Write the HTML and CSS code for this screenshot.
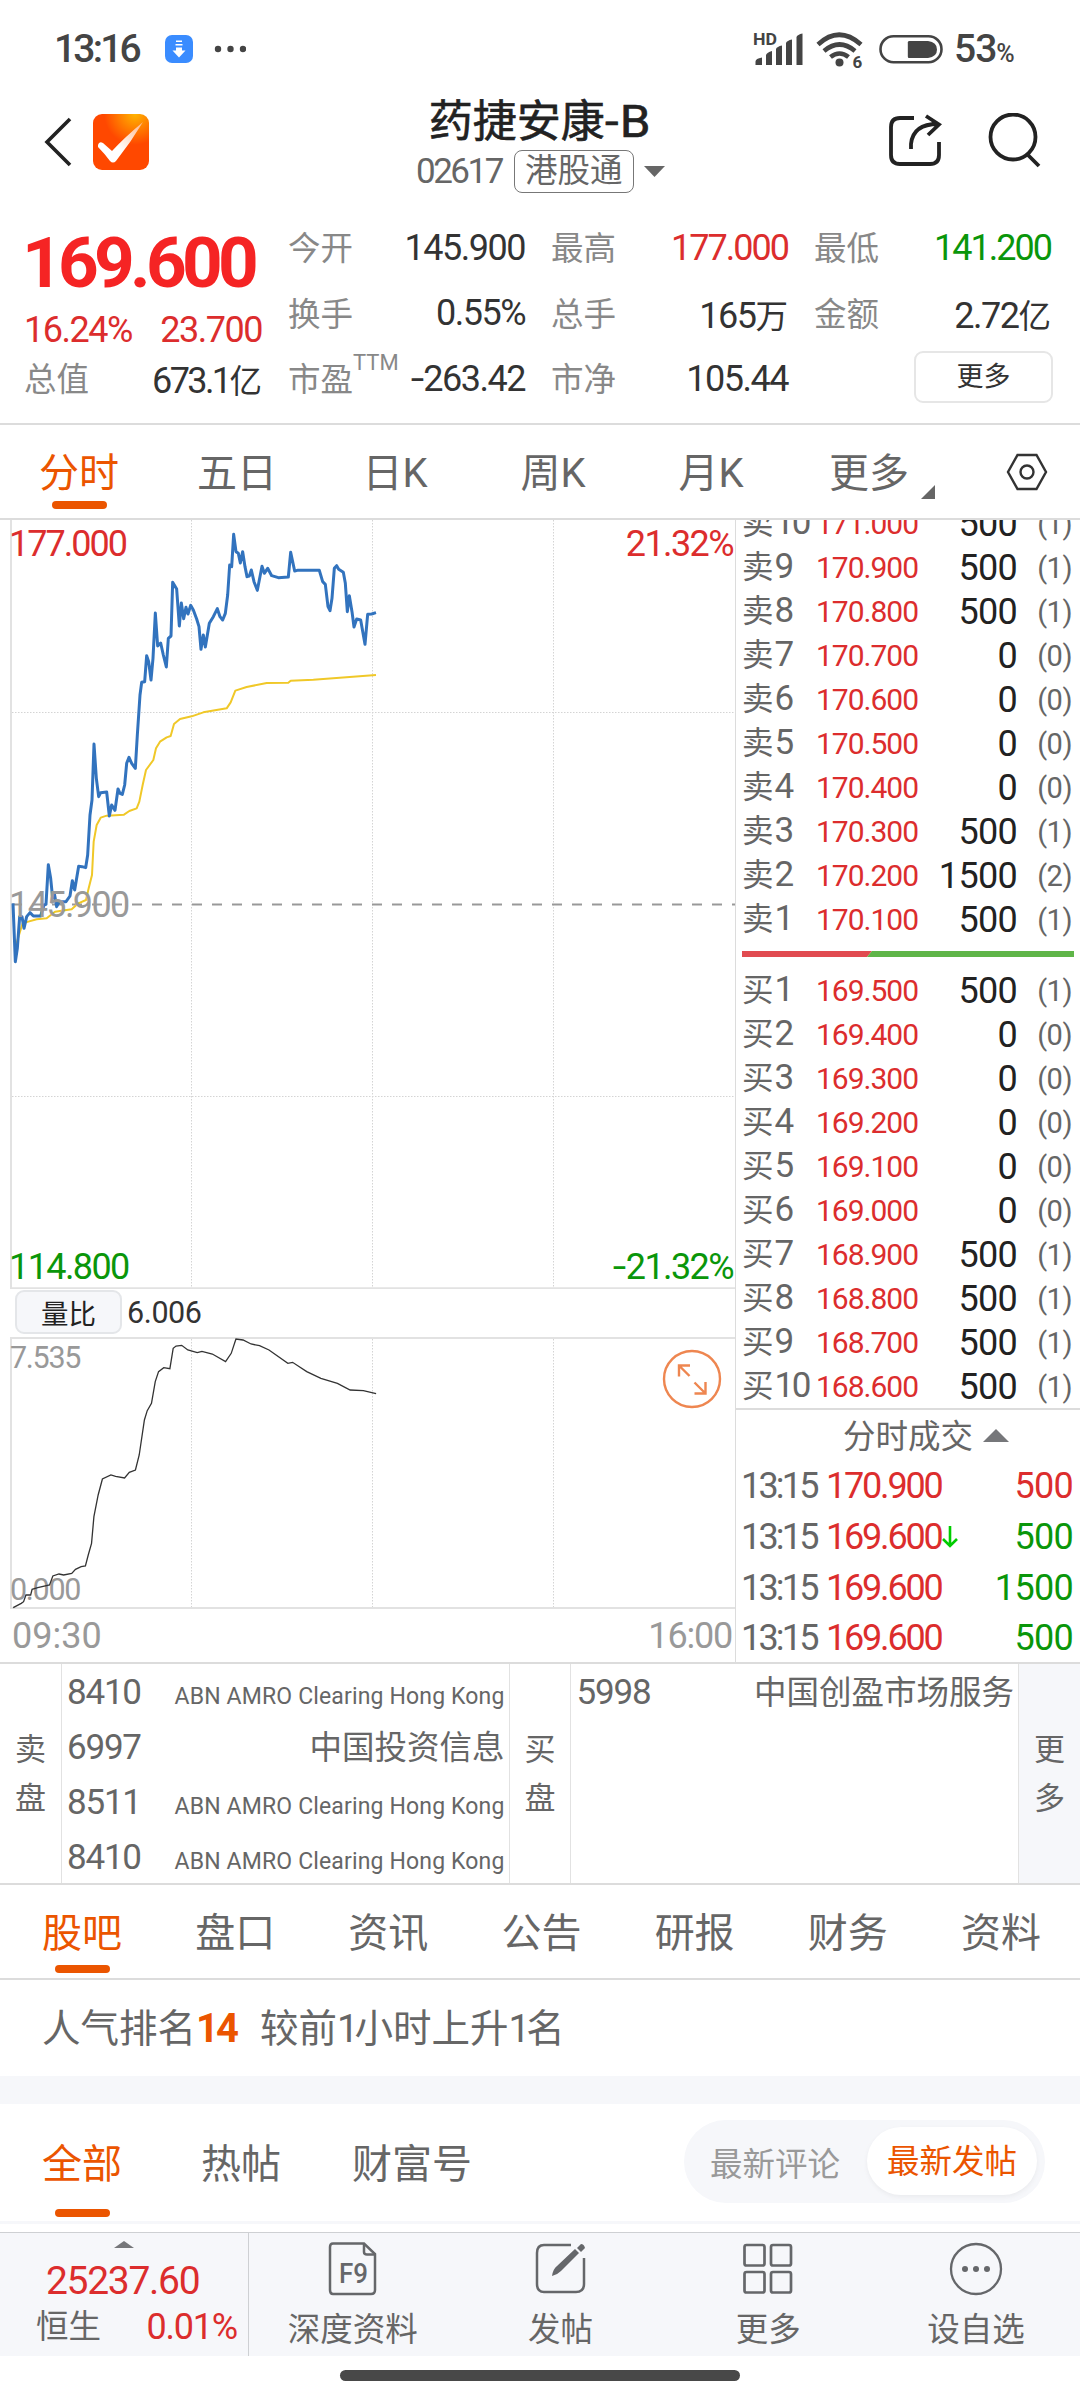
FILE: index.html
```
<!DOCTYPE html>
<html lang="zh-CN">
<head>
    <meta charset="UTF-8">
    <meta name="viewport" content="width=device-width, initial-scale=1.0">
    <title>药捷安康-B 02617</title>
    <link rel="stylesheet" href="styles.css">
</head>
<body>
    <!-- Status bar -->
    <div class="status-bar">
        <span class="clock">13:16</span>
        <svg class="download-icon" width="28" height="28" viewBox="0 0 28 28">
            <rect width="28" height="28" rx="7" fill="#3a8cff"/>
            <path d="M11 6.2h6M10.5 9.8h7" stroke="#fff" stroke-width="1.4"/>
            <path d="M11 12.5h6v3h3.5L14 22.5 7.500 15.500H11z" fill="#fff"/>
        </svg>
        <svg class="dots-icon" width="32" height="8" viewBox="0 0 32 8" fill="#444">
            <circle cx="4" cy="4" r="3.200"/><circle cx="16.500" cy="4" r="3.200"/><circle cx="29" cy="4" r="3.200"/>
        </svg>
        <div class="status-right">
            <svg width="201" height="40" viewBox="0 0 201 40">
                <g fill="#444">
                    <text x="0" y="16" font-size="16.500" font-weight="700" textLength="24" lengthAdjust="spacingAndGlyphs">HD</text>
                    <path d="M2.500 36v-3.500q0-3 6.500-4v7.500zM13 36V26q1-2.500 6-4v14zM23 36V20q1-2.500 6-3.500V36zM33 36V14q1-2.500 6-3.500V36zM43.500 36V8q1-2.500 6-3.500V36z"/>
                    <circle cx="86.500" cy="33.500" r="4"/>
                    <text x="99.500" y="39" font-size="17" font-weight="700">6</text>
                </g>
                <g fill="none" stroke="#444" stroke-width="4.600">
                    <path d="M65 15.500Q86 -4 108 15.500"/>
                    <path d="M71 22Q86.500 9 102 22"/>
                    <path d="M77.500 28Q86.500 21 95.500 28"/>
                </g>
                <rect x="127.500" y="7.200" width="61" height="26" rx="13" fill="none" stroke="#444" stroke-width="2.600"/>
                <path d="M156 12h19q9 1 9 8.500t-9 8.500h-19q-1.200 0-1.200-1.500v-14q0-1.500 1.200-1.500z" fill="#444"/>
            </svg>
            <span class="battery">53<small>%</small></span>
        </div>
    </div>

    <!-- Header -->
    <header class="header">
        <div class="header-left">
            <svg width="28" height="50" viewBox="0 0 28 50"><path d="M26 2L3 25l23 23" fill="none" stroke="#222" stroke-width="3.600"/></svg>
            <svg class="app-logo" width="56" height="56" viewBox="0 0 56 56">
                <defs>
                    <radialGradient id="logoBg" cx=".75" cy="0" r=".55"><stop offset="0" stop-color="#ffb400"/><stop offset="1" stop-color="#ff4800"/></radialGradient>
                    <linearGradient id="tick" x1="0" y1="1" x2="1" y2="0"><stop offset=".4" stop-color="#fff"/><stop offset="1" stop-color="#ffb68a"/></linearGradient>
                </defs>
                <rect width="56" height="56" rx="9" fill="url(#logoBg)"/>
                <path d="M5 31q1-4 5-2l9 8Q32 23 50 8 38 28 23 47q-3 3-6 0Q11 39 5 33z" fill="url(#tick)"/>
            </svg>
        </div>
        <div class="stock">
            <h1>药捷安康<em>-B</em></h1>
            <div class="stock-code">
                <span>02617</span>
                <span class="tag">港股通</span>
                <svg width="21" height="11" viewBox="0 0 21 11"><path d="M0 0h21L10.500 11z" fill="#666"/></svg>
            </div>
        </div>
        <div class="header-right">
            <svg width="54" height="56" viewBox="0 0 54 56" fill="none" stroke="#222" stroke-width="3.800">
                <path d="M26 5H12q-9 0-9 9v28q0 9 9 9h30q9 0 9-9V29"/>
                <path d="M23 36V31Q25 11 50 11M38 3l13 8.500L40 22"/>
            </svg>
            <svg width="54" height="56" viewBox="0 0 54 56" fill="none" stroke="#222" stroke-width="3.800">
                <circle cx="25" cy="24" r="22.500"/><path d="M39 41l12 12"/>
            </svg>
        </div>
    </header>

    <!-- Quote summary -->
    <section class="quote">
        <div class="quote-main">
            <div class="price">169.600</div>
            <div class="pair red"><span>16.24%</span><span>23.700</span></div>
            <div class="pair"><label>总值</label><span class="total">673.1<i>亿</i></span></div>
        </div>
        <div class="quote-grid">
            <div class="pair"><label>今开</label><span>145.900</span></div>
            <div class="pair"><label>最高</label><span class="red tight">177.000</span></div>
            <div class="pair"><label>最低</label><span class="green tight">141.200</span></div>
            <div class="pair"><label>换手</label><span>0.55%</span></div>
            <div class="pair"><label>总手</label><span>165<i>万</i></span></div>
            <div class="pair"><label>金额</label><span>2.72<i>亿</i></span></div>
            <div class="pair"><label>市盈<sup>TTM</sup></label><span><em class="minus">-</em>263.42</span></div>
            <div class="pair"><label>市净</label><span>105.44</span></div>
            <div class="pair"><button class="more-button">更多</button></div>
        </div>
    </section>

    <!-- Period tabs -->
    <nav class="period-tabs">
        <a class="active">分时</a>
        <a>五日</a>
        <a>日K</a>
        <a>周K</a>
        <a>月K</a>
        <a class="has-menu">更多</a>
        <svg width="42" height="40" viewBox="0 0 42 40" fill="none" stroke="#333" stroke-width="2.400">
            <path d="M11.500 3h19L40 20l-9.500 17h-19L2 20z"/><circle cx="21" cy="20" r="6.500"/>
        </svg>
    </nav>

    <main class="trade">
        <div class="charts">
            <!-- Price chart -->
            <div class="price-chart">
                <svg width="735" height="769" viewBox="0 520 735 769">
                    <g stroke="#d4d4d4" stroke-dasharray="1.500 1.500">
                        <path d="M191.500 520v768M372.500 520v768M553.500 520v768M12 712.500h723M12 1096.500h723"/>
                    </g>
                    <path d="M11 520v768.200h724" fill="none" stroke="#e2e2e2" stroke-width="2"/>
                    <path d="M12 904.500h723" stroke="#999" stroke-width="2" stroke-dasharray="10 10"/>
                    <g transform="translate(0 515) scale(.33333)" fill="none" stroke-linejoin="round">
                        <polyline stroke="#f0c828" stroke-width="6" points="48,1290 60,1250 68,1225 85,1220 110,1213 140,1210 165,1190 215,1183 235,1165 258,1155 266,1120 276,1080 281,980 290,930 302,908 320,902 372,899 388,888 410,880 418,860 428,810 438,765 460,735 468,700 480,680 500,667 512,663 522,627 540,612 575,604 610,592 680,580 692,562 706,527 740,516 800,504 865,503 872,497 940,494 1128,480"/>
                        <polyline stroke="#3273be" stroke-width="9" points="39,1165 46,1340 52,1300 59,1205 66,1205 72,1240 80,1205 90,1193 100,1203 122,1203 132,1170 138,1168 145,1049 152,1090 158,1150 163,1135 170,1175 178,1160 198,1160 210,1143 217,1097 224,1125 236,1054 246,1055 257,1058 263,1020 270,900 276,855 282,687 289,790 296,845 302,833 320,831 328,903 335,870 345,886 354,822 360,835 367,838 374,810 380,745 387,727 395,745 406,760 412,660 420,540 425,502 434,500 440,422 446,440 453,495 459,430 466,294 473,393 482,384 490,420 499,456 505,370 513,363 518,202 530,222 538,333 544,264 551,311 558,277 564,297 572,271 580,285 590,312 597,335 603,403 610,360 616,396 628,325 640,305 652,281 660,305 668,315 676,295 683,240 689,150 695,155 701,58 708,110 715,115 721,144 728,110 735,155 741,185 748,183 754,165 762,200 772,226 786,154 793,175 803,160 815,182 835,188 865,186 872,112 884,168 892,166 958,166 968,200 976,208 984,275 990,287 996,250 1003,160 1010,152 1016,163 1030,172 1036,205 1042,290 1048,242 1056,290 1062,336 1070,312 1082,315 1095,388 1103,298 1115,297 1128,293"/>
                    </g>
                </svg>
                <span class="chart-label top-left red">177.000</span>
                <span class="chart-label top-right red">21.32%</span>
                <span class="chart-label middle-left">145.900</span>
                <span class="chart-label bottom-left green">114.800</span>
                <span class="chart-label bottom-right green"><em class="minus">-</em>21.32%</span>
            </div>

            <div class="indicator">
                <button>量比</button>
                <span>6.006</span>
            </div>

            <!-- Volume ratio chart -->
            <div class="ratio-chart">
                <svg width="735" height="272" viewBox="0 1337 735 272">
                    <path d="M191.500 1339v268M372.500 1339v268M553.500 1339v268" stroke="#d4d4d4" stroke-dasharray="1.500 1.500"/>
                    <path d="M735 1338H11v270h724" fill="none" stroke="#e2e2e2" stroke-width="2"/>
                </svg>
                <span class="chart-label small ratio-top">7.535</span>
                <span class="chart-label small ratio-bottom">0.000</span>
                <svg class="ratio-line" width="735" height="272" viewBox="0 1337 735 272">
                    <g transform="translate(0 1220) scale(.4719 .33333)">
                        <polyline vector-effect="non-scaling-stroke" fill="none" stroke="#333" stroke-width="1.300" points="28,1163 45,1150 50,1145 55,1125 65,1125 68,1108 80,1103 105,1095 112,1068 125,1062 135,1065 152,1060 160,1048 172,1040 181,1038 187,1005 194,970 199,890 208,825 217,777 235,765 245,769 264,774 274,757 287,750 295,705 306,600 312,572 321,550 329,485 336,455 347,443 360,446 367,385 373,378 385,376 398,390 418,398 428,394 450,402 478,425 490,400 500,357 515,360 532,372 550,377 570,390 610,430 620,427 650,455 680,475 715,490 742,510 770,512 797,521"/>
                    </g>
                </svg>
                <svg class="expand-icon" width="60" height="60" viewBox="0 0 60 60" fill="none" stroke="#ee8650" stroke-width="2.400">
                    <circle cx="30" cy="30" r="28"/>
                    <path d="M27.500 27L17.500 17M17 27.500V16.500h11M32.500 33.500l11 11M43.500 33v11.500h-11"/>
                </svg>
            </div>
            <div class="time-axis"><span>09:30</span><span class="end">16:00</span></div>
        </div>

        <!-- Order book -->
        <div class="book">
            <div class="asks">
                <div class="row"><b>卖<em>10</em></b><span>171.000</span><strong>500</strong><small>(1)</small></div>
                <div class="row"><b>卖<em>9</em></b><span>170.900</span><strong>500</strong><small>(1)</small></div>
                <div class="row"><b>卖<em>8</em></b><span>170.800</span><strong>500</strong><small>(1)</small></div>
                <div class="row"><b>卖<em>7</em></b><span>170.700</span><strong>0</strong><small>(0)</small></div>
                <div class="row"><b>卖<em>6</em></b><span>170.600</span><strong>0</strong><small>(0)</small></div>
                <div class="row"><b>卖<em>5</em></b><span>170.500</span><strong>0</strong><small>(0)</small></div>
                <div class="row"><b>卖<em>4</em></b><span>170.400</span><strong>0</strong><small>(0)</small></div>
                <div class="row"><b>卖<em>3</em></b><span>170.300</span><strong>500</strong><small>(1)</small></div>
                <div class="row"><b>卖<em>2</em></b><span>170.200</span><strong>1500</strong><small>(2)</small></div>
                <div class="row"><b>卖<em>1</em></b><span>170.100</span><strong>500</strong><small>(1)</small></div>
            </div>
            <svg class="balance" width="332" height="6" viewBox="0 0 332 6"><path d="M0 0h130l-5 6H0z" fill="#e14b50"/><path d="M130 0h202v6H125z" fill="#5fb548"/></svg>
            <div class="bids">
                <div class="row"><b>买<em>1</em></b><span>169.500</span><strong>500</strong><small>(1)</small></div>
                <div class="row"><b>买<em>2</em></b><span>169.400</span><strong>0</strong><small>(0)</small></div>
                <div class="row"><b>买<em>3</em></b><span>169.300</span><strong>0</strong><small>(0)</small></div>
                <div class="row"><b>买<em>4</em></b><span>169.200</span><strong>0</strong><small>(0)</small></div>
                <div class="row"><b>买<em>5</em></b><span>169.100</span><strong>0</strong><small>(0)</small></div>
                <div class="row"><b>买<em>6</em></b><span>169.000</span><strong>0</strong><small>(0)</small></div>
                <div class="row"><b>买<em>7</em></b><span>168.900</span><strong>500</strong><small>(1)</small></div>
                <div class="row"><b>买<em>8</em></b><span>168.800</span><strong>500</strong><small>(1)</small></div>
                <div class="row"><b>买<em>9</em></b><span>168.700</span><strong>500</strong><small>(1)</small></div>
                <div class="row"><b>买<em>10</em></b><span>168.600</span><strong>500</strong><small>(1)</small></div>
            </div>
            <div class="deals">
                <div class="deals-title"><span>分时成交</span><svg width="26" height="13" viewBox="0 0 26 13"><path d="M0 13h26L13 0z" fill="#76777a"/></svg></div>
                <div class="deal"><time>13:15</time><span>170.900</span><strong class="red">500</strong></div>
                <div class="deal"><time>13:15</time><span>169.600</span>
                    <svg width="16" height="22" viewBox="0 0 16 22" fill="none" stroke="#0c0" stroke-width="2.600"><path d="M8 0v20M1 13l7 7 7-7"/></svg>
                    <strong class="green">500</strong></div>
                <div class="deal"><time>13:15</time><span>169.600</span><strong class="green">1500</strong></div>
                <div class="deal"><time>13:15</time><span>169.600</span><strong class="green">500</strong></div>
            </div>
        </div>
    </main>

    <!-- Broker queue -->
    <section class="brokers">
        <div class="side">卖<br>盘</div>
        <div class="broker-list">
            <div><span>8410</span><small>ABN AMRO Clearing Hong Kong</small></div>
            <div><span>6997</span><i>中国投资信息</i></div>
            <div><span>8511</span><small>ABN AMRO Clearing Hong Kong</small></div>
            <div><span>8410</span><small>ABN AMRO Clearing Hong Kong</small></div>
        </div>
        <div class="side">买<br>盘</div>
        <div class="broker-list">
            <div><span>5998</span><i>中国创盈市场服务</i></div>
        </div>
        <div class="side side-more">更<br>多</div>
    </section>

    <nav class="info-tabs">
        <a class="active">股吧</a>
        <a>盘口</a>
        <a>资讯</a>
        <a>公告</a>
        <a>研报</a>
        <a>财务</a>
        <a>资料</a>
    </nav>

    <div class="rank">人气排名<b>14</b><span>较前<em>1</em>小时上升<em>1</em>名</span></div>

    <div class="filter">
        <a class="active">全部</a>
        <a>热帖</a>
        <a>财富号</a>
        <div class="toggle"><span>最新评论</span><span class="on">最新发帖</span></div>
    </div>

    <!-- Bottom bar -->
    <footer class="bottom-bar">
        <div class="index">
            <svg width="20" height="7" viewBox="0 0 20 7"><path d="M0 7h20L10 0z" fill="#76777a"/></svg>
            <div class="index-value">25237.60</div>
            <div class="index-change"><span>恒生</span><span class="red">0.01%</span></div>
        </div>
        <div class="action">
            <svg width="54" height="56" viewBox="0 0 54 56" fill="none" stroke="#65676a" stroke-width="2.500">
                <path d="M7 2.500h31L49 13v36q0 4-4 4H7q-3 0-3-4V6q0-3.500 3-3.500z"/><path d="M38 3v8q0 2.500 3 2.500h7"/>
                <text x="13" y="41.500" font-size="28" font-weight="500" fill="#65676a" stroke="none" textLength="29" lengthAdjust="spacingAndGlyphs">F9</text>
            </svg>
            <span>深度资料</span>
        </div>
        <div class="action">
            <svg width="54" height="56" viewBox="0 0 54 56" fill="none" stroke="#65676a" stroke-width="2.500">
                <path d="M37 4H10q-7 0-7 8v31q0 8 7 8h32q8 0 8-8V17"/>
                <path d="M18 35q1-7 5-10L41 8l4 4-18 18q-4 4-9 5zM43 7l4-4q3 0 4 4l-4 4z" fill="#65676a" stroke="none"/>
            </svg>
            <span>发帖</span>
        </div>
        <div class="action">
            <svg width="54" height="56" viewBox="0 0 54 56" fill="none" stroke="#65676a" stroke-width="2.700">
                <rect x="3.500" y="4" width="20" height="20.500" rx="2"/><rect x="30" y="4" width="20" height="20.500" rx="2"/>
                <rect x="3.500" y="31" width="20" height="20.500" rx="2"/><rect x="30" y="31" width="20" height="20.500" rx="2"/>
            </svg>
            <span>更多</span>
        </div>
        <div class="action">
            <svg width="54" height="56" viewBox="0 0 54 56" fill="none" stroke="#65676a" stroke-width="2.300">
                <circle cx="27" cy="28" r="25"/>
                <g fill="#65676a" stroke="none"><circle cx="16" cy="28" r="3"/><circle cx="27" cy="28" r="3"/><circle cx="38" cy="28" r="3"/></g>
            </svg>
            <span>设自选</span>
        </div>
    </footer>
    <div class="home-indicator"></div>
</body>
</html>
```
FILE: styles.css
```
* {
    box-sizing: border-box;
}

body {
    margin: 0;
    width: 1080px;
    height: 2400px;
    overflow: hidden;
    background: #fff;
    color: #666;
    font-family: Roboto, "Noto Sans CJK SC", sans-serif;
    font-size: 33px;
}

svg {
    display: block;
    flex-shrink: 0;
}

i, em {
    font-style: normal;
}

.red {
    color: #dc2d2d;
}

.green {
    color: #0a960a;
}

/* wide minus sign */
.minus {
    display: inline-block;
    transform: scaleX(1.35);
    transform-origin: right;
    padding-right: 1px;
}

/* Status bar */
.status-bar {
    display: flex;
    align-items: center;
    height: 98px;
    padding: 0 61px 0 54px;
    color: #444;
}

.clock {
    width: 111px;
    font-size: 39px;
    font-weight: 500;
    letter-spacing: -2.8px;
}

.dots-icon {
    margin-left: 21px;
}

.status-right {
    display: flex;
    align-items: center;
    margin-left: auto;
    width: 266px;
}

.battery {
    font-size: 39px;
    font-weight: 500;
    letter-spacing: -1px;
}

.battery small {
    font-size: 25px;
}

/* Header */
.header {
    display: grid;
    grid-template-columns: 300px 1fr 300px;
    height: 124px;
}

.header-left {
    display: flex;
    gap: 21px;
    height: 88px;
    padding-left: 44px;
    align-items: center;
}

.stock h1 {
    margin: 0;
    color: #222;
    font-size: 44px;
    font-weight: 400;
    line-height: 48px;
    text-align: center;
    -webkit-text-stroke: .6px #222;
}

.stock h1 em {
    display: inline-block;
    margin-right: 5px;
    letter-spacing: 1px;
    transform: scaleX(1.12);
    transform-origin: left;
}

.stock-code {
    display: flex;
    align-items: center;
    height: 46px;
    margin-top: 2px;
    padding-left: 116px;
    font-size: 35px;
    letter-spacing: -2.5px;
}

.tag {
    width: 120px;
    height: 43px;
    margin: 0 10px 0 12px;
    border: 1px solid #777;
    border-radius: 8px;
    font-size: 32.5px;
    line-height: 40px;
    text-align: center;
    letter-spacing: 0;
}

.header-right {
    display: flex;
    gap: 46px;
    padding: 15px 0 0 108px;
}

/* Quote summary */
.quote {
    display: flex;
    height: 203px;
    padding-right: 29px;
    border-bottom: 2px solid #dcdcdc;
}

.quote-main {
    width: 262px;
    padding: 2px 0 0 26px;
}

.price {
    height: 82px;
    margin-left: -4px;
    color: #f52424;
    font-size: 71px;
    font-weight: 700;
    line-height: 78px;
    letter-spacing: -4.7px;
}

.pair {
    display: flex;
    justify-content: space-between;
    align-items: center;
    height: 48px;
    color: #333;
    font-size: 36px;
    letter-spacing: -1.5px;
}

.pair.red {
    margin-left: -2px;
    color: #dc2d2d;
}

.tight {
    letter-spacing: -2px;
}

.total {
    letter-spacing: -2.6px;
}

.pair label, .pair i {
    font-size: 32.5px;
    letter-spacing: 0;
}

.pair label {
    position: relative;
    margin: -4px 0 0 -2px;
    color: #888;
}

.pair sup {
    position: absolute;
    left: 65px;
    top: -1px;
    font-size: 22px;
    line-height: 22px;
}

.quote-grid {
    flex: 1;
    display: grid;
    grid-template-columns: repeat(3, 235px);
    grid-auto-rows: 65.5px;
    column-gap: 28px;
    padding-left: 28px;
    margin-top: -7px;
}

.quote-grid .pair {
    height: 65px;
}

.more-button {
    width: 139px;
    height: 52px;
    margin: -3px -2px 0 auto;
    padding: 0 0 6px;
    border: 2px solid #e6e6e6;
    border-radius: 9px;
    background: #fff;
    color: #333;
    font-family: inherit;
    font-size: 27px;
}

/* Period tabs */
.period-tabs {
    display: grid;
    grid-template-columns: repeat(7, 158px);
    justify-items: center;
    align-items: center;
    height: 95px;
    padding-bottom: 4px;
    border-bottom: 2px solid #dcdcdc;
    font-size: 40px;
}

.period-tabs a, .info-tabs a, .filter a {
    position: relative;
}

.active {
    color: #eb5500;
}

.active::after {
    content: "";
    position: absolute;
    left: 50%;
    bottom: -10px;
    width: 55px;
    height: 8px;
    margin-left: -27.5px;
    border-radius: 4px;
    background: #eb5500;
}

.has-menu::after {
    content: "";
    position: absolute;
    right: -26px;
    bottom: 0;
    border-left: 14px solid transparent;
    border-bottom: 14px solid #666;
}

.period-tabs svg {
    margin-top: 4px;
}

/* Charts and order book */
.trade {
    display: flex;
    height: 1144px;
    border-bottom: 2px solid #dcdcdc;
}

.charts {
    width: 736px;
    border-right: 1px solid #dcdcdc;
}

.price-chart, .ratio-chart {
    position: relative;
}

.chart-label {
    position: absolute;
    line-height: 36px;
    font-size: 36px;
    letter-spacing: -1.6px;
}

.top-left { left: 9px; top: 6px; letter-spacing: -2px; }
.top-right { right: 2px; top: 6px; }
.middle-left { left: 9px; top: 367px; color: #999; }
.bottom-left { left: 9px; bottom: 4px; }
.bottom-right { right: 2px; bottom: 4px; }

.chart-label.small {
    left: 10px;
    color: #999;
    font-size: 30.5px;
    letter-spacing: -1.3px;
}

.ratio-top { top: 3px; }
.ratio-bottom { bottom: 1px; }

.ratio-line {
    position: absolute;
    left: 0;
    top: 0;
}

.expand-icon {
    position: absolute;
    left: 662px;
    top: 12px;
}

.indicator {
    display: flex;
    align-items: center;
    gap: 5px;
    height: 48px;
    padding: 0 0 2px 15px;
    color: #333;
    font-size: 30.5px;
    letter-spacing: -.4px;
}

.indicator button {
    width: 107px;
    height: 44px;
    padding: 0 0 6px;
    border: 2px solid #e4e6e9;
    border-radius: 9px;
    background: #f6f7fa;
    color: #222;
    font-family: inherit;
    font-size: 27.5px;
}

.time-axis {
    display: flex;
    justify-content: space-between;
    padding: 0 3px 0 12px;
    color: #999;
    font-size: 36px;
    line-height: 54px;
}

.time-axis .end {
    letter-spacing: -1.2px;
}

.book {
    flex: 1;
}

.asks {
    display: flex;
    flex-direction: column;
    justify-content: flex-end;
    height: 421px;
    overflow: hidden;
}

.row {
    display: grid;
    grid-template-columns: 74px 95px 106px 55px;
    flex-shrink: 0;
    align-items: center;
    height: 44px;
    padding-left: 6px;
    line-height: 44px;
}

.row b {
    font-size: 31.5px;
    font-weight: 400;
    white-space: nowrap;
}

.row em {
    font-size: 35px;
    letter-spacing: -2.4px;
    margin-left: 1px;
}

.row span {
    color: #dc2d2d;
    font-size: 30px;
    letter-spacing: -1px;
    text-align: right;
}

.row strong {
    color: #222;
    font-size: 36px;
    font-weight: 400;
    letter-spacing: -.7px;
    text-align: right;
}

.row small {
    font-size: 29px;
    letter-spacing: -.5px;
    text-align: right;
}

.balance {
    margin: 10px 0 11px 6px;
}

.deals {
    border-top: 2px solid #dcdcdc;
}

.deals-title {
    display: flex;
    align-items: center;
    gap: 10px;
    height: 51px;
    padding-left: 107px;
    font-size: 32.5px;
}

.deals-title span {
    margin-top: -5px;
}

.deal {
    display: flex;
    align-items: center;
    height: 50.7px;
    padding: 0 7px 0 5px;
    font-size: 36px;
    letter-spacing: -1.4px;
}

.deal time {
    width: 85px;
    letter-spacing: -2.8px;
}

.deal span {
    width: 116px;
    color: #dc2d2d;
    letter-spacing: -2.2px;
}

.deal strong {
    margin-left: auto;
    font-weight: 400;
    letter-spacing: -.7px;
}

/* Broker queue */
.brokers {
    display: flex;
    height: 221px;
    border-bottom: 2px solid #dcdcdc;
}

.side {
    width: 61px;
    padding-top: 61px;
    font-size: 31px;
    line-height: 49px;
    text-align: center;
}

.side-more {
    background: #f6f7fa;
}

.broker-list {
    width: 449px;
    padding: 1px 4px 0 5px;
    border: solid #e2e2e2;
    border-width: 0 1px;
}

.broker-list div {
    display: flex;
    justify-content: space-between;
    align-items: baseline;
    height: 55px;
    font-size: 35px;
    line-height: 55px;
    letter-spacing: -1.2px;
}

.broker-list small {
    font-size: 23px;
    letter-spacing: .15px;
}

.broker-list i {
    font-size: 32.5px;
    letter-spacing: 0;
}

/* Community */
.info-tabs {
    display: flex;
    justify-content: space-between;
    align-items: center;
    height: 95px;
    padding: 0 39px 3px 42px;
    border-bottom: 2px solid #dcdcdc;
    font-size: 40px;
}

.info-tabs .active::after {
    bottom: -14px;
}

.rank {
    box-sizing: content-box;
    height: 96px;
    padding: 0 42px;
    border-bottom: 28px solid #f6f7fa;
    font-size: 38.5px;
    line-height: 98px;
}

.rank b {
    color: #eb5500;
    font-size: 40px;
    letter-spacing: -3px;
}

.rank span {
    margin-left: 24px;
}

.rank em {
    letter-spacing: -4px;
}

.filter {
    display: flex;
    align-items: center;
    gap: 79px;
    height: 120px;
    padding: 0 35px 4px 42px;
    border-bottom: 3px solid #f6f7fa;
    font-size: 40px;
}

.filter a:nth-child(3) {
    margin-left: -8px;
}

.filter .active::after {
    bottom: -27px;
}

.toggle {
    display: flex;
    align-items: center;
    justify-content: space-between;
    width: 361px;
    height: 83px;
    margin: 1px 0 0 auto;
    padding: 0 8px 0 26px;
    border-radius: 42px;
    background: #f6f7fa;
    color: #999;
    font-size: 32.5px;
}

.toggle .on {
    width: 170px;
    height: 68px;
    border-radius: 34px;
    background: #fff;
    box-shadow: 0 2px 5px rgba(0, 0, 0, 0.05);
    color: #eb5500;
    line-height: 70px;
    text-align: center;
}

/* Bottom bar */
.bottom-bar {
    display: flex;
    height: 124px;
    margin-top: 8px;
    border-top: 1px solid #ced0d3;
    background: #f6f7fa;
}

.index {
    width: 249px;
    padding: 8px 11px 0 36px;
    border-right: 1px solid #ced0d3;
}

.index svg {
    margin: 0 auto 0 78px;
}

.index-value {
    height: 56px;
    padding: 3px 0 0 10px;
    color: #dc2d2d;
    font-size: 39px;
    line-height: 60px;
    letter-spacing: -1.3px;
}

.index-change {
    display: flex;
    justify-content: space-between;
    font-size: 32.5px;
    line-height: 47px;
}

.index-change .red {
    font-size: 36px;
    letter-spacing: -1.2px;
}

.action {
    flex: 1;
    display: flex;
    flex-direction: column;
    align-items: center;
    padding-top: 8px;
    font-size: 32.5px;
    line-height: 67px;
}

.home-indicator {
    width: 400px;
    height: 11px;
    margin: 14px auto 0;
    border-radius: 6px;
    background: #484848;
}
```
